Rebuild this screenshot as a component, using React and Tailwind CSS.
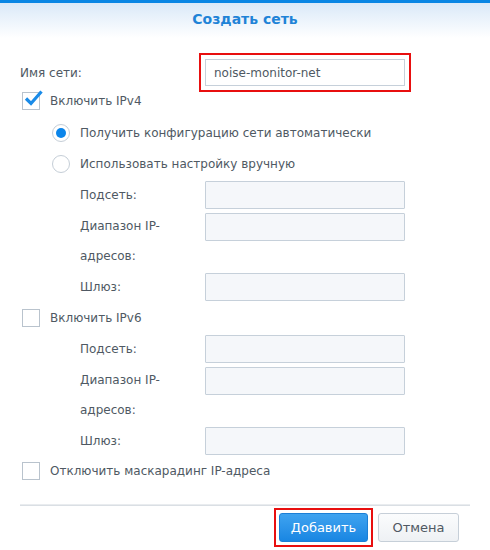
import React from "react";

const font = { fontFamily: '"DejaVu Sans", Verdana, sans-serif' };

function Checkbox({ checked }) {
  return (
    <div className="relative w-[18px] h-[18px] border border-[#b9c3cd] bg-white shrink-0">
      {checked && (
        <svg className="absolute left-[1px] top-[-4px]" width="20" height="20" viewBox="0 0 20 20">
          <path d="M2 9.5 L7 14.5 L17.5 2.5" fill="none" stroke="#1a8be8" strokeWidth="3.2" strokeLinecap="butt" strokeLinejoin="miter" />
        </svg>
      )}
    </div>
  );
}

function Radio({ checked }) {
  return (
    <div className="w-[18px] h-[18px] rounded-full border border-[#c5ced7] bg-white flex items-center justify-center shrink-0">
      {checked && <div className="w-[10px] h-[10px] rounded-full bg-[#0b85ea]" />}
    </div>
  );
}

function Field() {
  return <div className="w-[200px] h-[28px] border border-[#c6d0da] bg-[#f5f7fa] rounded-[1px]" />;
}

function SubRows() {
  return (
    <>
      <div className="flex items-center h-[32px] pl-[80px]">
        <div className="w-[125px]">Подсеть:</div>
        <Field />
      </div>
      <div className="flex items-start h-[60px] pl-[80px]">
        <div className="w-[125px] leading-[30px]">
          <div>Диапазон IP-</div>
          <div>адресов:</div>
        </div>
        <div className="mt-[2px]">
          <Field />
        </div>
      </div>
      <div className="flex items-center h-[32px] pl-[80px]">
        <div className="w-[125px]">Шлюз:</div>
        <Field />
      </div>
    </>
  );
}

export default function App() {
  return (
    <div className="w-[490px] h-[550px] bg-white text-[12px] text-[#4f5963] overflow-hidden" style={font}>
      <div className="h-[38px] border-t-[3px] border-[#0a86e4] bg-gradient-to-b from-[#dae9f8] to-white flex items-center justify-center">
        <div className="font-bold text-[14px] text-[#1f83d7] mt-[-2px]">Создать сеть</div>
      </div>

      <div className="flex items-center h-[37px] mt-[16px] pl-[20px]">
        <div className="w-[179px]">Имя сети:</div>
        <div className="border-2 border-[#e80f0f] p-[4px]">
          <div className="w-[200px] h-[27px] border border-[#c6d0da] bg-white flex items-center pl-[8px] text-[#4f5963]">
            noise-monitor-net
          </div>
        </div>
      </div>

      <div className="flex items-center h-[20px] pl-[22px] gap-[10px]">
        <Checkbox checked />
        <div>Включить IPv4</div>
      </div>

      <div className="flex items-center h-[31px] mt-[6px] pl-[52px] gap-[10px]">
        <Radio checked />
        <div>Получить конфигурацию сети автоматически</div>
      </div>
      <div className="flex items-center h-[31px] pl-[52px] gap-[10px]">
        <Radio />
        <div>Использовать настройку вручную</div>
      </div>

      <SubRows />

      <div className="flex items-center h-[30px] pl-[22px] gap-[10px]">
        <Checkbox />
        <div>Включить IPv6</div>
      </div>

      <SubRows />

      <div className="flex items-center h-[28px] pl-[22px] gap-[10px]">
        <Checkbox />
        <div>Отключить маскарадинг IP-адреса</div>
      </div>

      <div className="mx-[20px] mt-[19px] h-[2px] border-t border-[#e9ecef] bg-[#dadfe4]" />

      <div className="flex justify-end pr-[31px] mt-[7px] gap-[10px] items-center">
        <div className="relative">
          <div className="absolute -inset-[5px] border-2 border-[#e80f0f]" />
          <div className="w-[89px] h-[29px] rounded-[3px] border border-[#1b7fd6] bg-gradient-to-b from-[#3ea3f0] to-[#1886e2] text-white flex items-center justify-center text-[13px]">
            Добавить
          </div>
        </div>
        <div className="w-[81px] h-[29px] rounded-[3px] border border-[#c6cfd8] bg-gradient-to-b from-[#fbfcfd] to-[#eef1f4] flex items-center justify-center text-[13px]">
          Отмена
        </div>
      </div>
    </div>
  );
}
